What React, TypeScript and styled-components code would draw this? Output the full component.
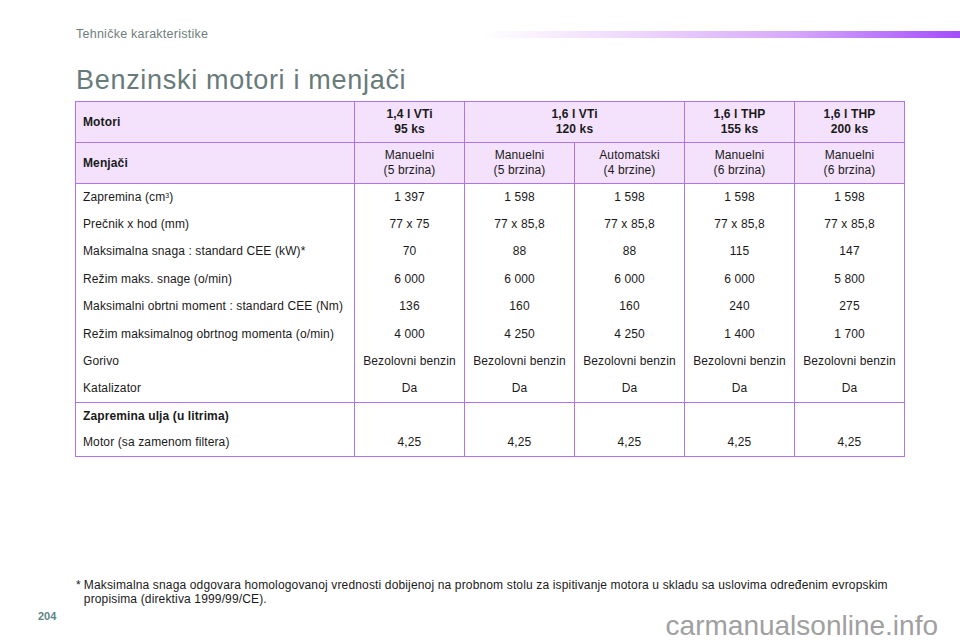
import React from "react";
import styled, { createGlobalStyle } from "styled-components";

const Global = createGlobalStyle`
  html, body { margin: 0; padding: 0; background: #fff; }
  body { font-family: "Liberation Sans", Arial, sans-serif; }
`;

const Page = styled.div`
  width: 960px;
  height: 640px;
  display: flex;
  flex-direction: column;
  overflow: hidden;
  background: #fff;
`;

const TopBar = styled.div`
  display: flex;
  align-items: center;
  padding-top: 27px;
  height: 14px;
`;

const Section = styled.div`
  flex: 1;
  padding-left: 76px;
  font-size: 12.5px;
  letter-spacing: 0.25px;
  color: #6f7d7d;
`;

const GradientBar = styled.div`
  width: 478px;
  height: 7px;
  margin-top: 1px;
  background: linear-gradient(to right, rgba(255, 255, 255, 0) 0%, #efd9fc 30%, #d7a9fb 65%, #a44cfd 100%);
`;

const Title = styled.h1`
  margin: 23px 0 0 76px;
  font-weight: normal;
  font-size: 27px;
  letter-spacing: 0.7px;
  line-height: 32px;
  color: #687a7a;
`;

const Table = styled.table`
  margin: 5px 0 0 75px;
  width: 829px;
  border-collapse: collapse;
  table-layout: fixed;
  font-size: 12px;
  letter-spacing: 0.12px;
  color: #1a1a1a;
  border: 1px solid #ad74f1;
`;

const Head = styled.tr`
  background: #f4e2fc;
  height: 41px;
`;

const Row = styled.tr<{ $h?: number; $sep?: boolean }>`
  height: ${(p) => p.$h ?? 27.4}px;
  ${(p) => (p.$sep ? "border-bottom: 1px solid #ad74f1;" : "")}
`;

const Cell = styled.td<{ $left?: boolean; $bold?: boolean }>`
  border-left: 1px solid #ad74f1;
  border-right: 1px solid #ad74f1;
  padding: ${(p) => (p.$left ? "0 0 0 7px" : "0")};
  text-align: ${(p) => (p.$left ? "left" : "center")};
  font-weight: ${(p) => (p.$bold ? "bold" : "normal")};
  vertical-align: middle;
  line-height: 15px;
  white-space: nowrap;
`;

const HeadCell = styled(Cell)`
  border-bottom: 1px solid #ad74f1;
`;

const Spacer = styled.div`
  flex: 1;
`;

const Footnote = styled.div`
  margin-left: 76px;
  font-size: 12px;
  letter-spacing: 0.15px;
  line-height: 13.5px;
  color: #1a1a1a;
  display: flex;
  gap: 3px;
`;

const Star = styled.span`
  flex: none;
`;

const Footer = styled.div`
  display: flex;
  justify-content: space-between;
  align-items: flex-start;
  height: 34px;
  flex: none;
`;

const PageNo = styled.div`
  margin-left: 38px;
  margin-top: 4px;
  font-size: 11px;
  line-height: 13px;
  font-weight: bold;
  color: #5e8585;
`;

const Watermark = styled.div`
  margin-right: 22px;
  margin-top: 8px;
  font-size: 28px;
  line-height: 24px;
  color: #a0a0a0;
`;

const Sup = styled.sup`
  font-size: 7px;
  vertical-align: top;
  position: relative;
  top: -2px;
`;

const dataRows: [React.ReactNode, string[]][] = [
  [<>Zapremina (cm<Sup>3</Sup>)</>, ["1 397", "1 598", "1 598", "1 598", "1 598"]],
  ["Prečnik x hod (mm)", ["77 x 75", "77 x 85,8", "77 x 85,8", "77 x 85,8", "77 x 85,8"]],
  ["Maksimalna snaga : standard CEE (kW)*", ["70", "88", "88", "115", "147"]],
  ["Režim maks. snage (o/min)", ["6 000", "6 000", "6 000", "6 000", "5 800"]],
  ["Maksimalni obrtni moment : standard CEE (Nm)", ["136", "160", "160", "240", "275"]],
  ["Režim maksimalnog obrtnog momenta (o/min)", ["4 000", "4 250", "4 250", "1 400", "1 700"]],
  ["Gorivo", ["Bezolovni benzin", "Bezolovni benzin", "Bezolovni benzin", "Bezolovni benzin", "Bezolovni benzin"]],
  ["Katalizator", ["Da", "Da", "Da", "Da", "Da"]],
];

export default function App() {
  return (
    <Page>
      <Global />
      <TopBar>
        <Section>Tehničke karakteristike</Section>
        <GradientBar />
      </TopBar>
      <Title>Benzinski motori i menjači</Title>
      <Table>
        <colgroup>
          <col style={{ width: 279 }} />
          <col style={{ width: 110 }} />
          <col style={{ width: 110 }} />
          <col style={{ width: 110 }} />
          <col style={{ width: 110 }} />
          <col style={{ width: 110 }} />
        </colgroup>
        <tbody>
          <Head>
            <HeadCell $left $bold>Motori</HeadCell>
            <HeadCell $bold>1,4 l VTi<br />95 ks</HeadCell>
            <HeadCell $bold colSpan={2}>1,6 l VTi<br />120 ks</HeadCell>
            <HeadCell $bold>1,6 l THP<br />155 ks</HeadCell>
            <HeadCell $bold>1,6 l THP<br />200 ks</HeadCell>
          </Head>
          <Head>
            <HeadCell $left $bold>Menjači</HeadCell>
            <HeadCell>Manuelni<br />(5 brzina)</HeadCell>
            <HeadCell>Manuelni<br />(5 brzina)</HeadCell>
            <HeadCell>Automatski<br />(4 brzine)</HeadCell>
            <HeadCell>Manuelni<br />(6 brzina)</HeadCell>
            <HeadCell>Manuelni<br />(6 brzina)</HeadCell>
          </Head>
          {dataRows.map(([label, vals], i) => (
            <Row key={i} $sep={i === dataRows.length - 1}>
              <Cell $left>{label}</Cell>
              {vals.map((v, j) => (
                <Cell key={j}>{v}</Cell>
              ))}
            </Row>
          ))}
          <Row $h={27}>
            <Cell $left $bold>Zapremina ulja (u litrima)</Cell>
            <Cell /><Cell /><Cell /><Cell /><Cell />
          </Row>
          <Row $h={27}>
            <Cell $left>Motor (sa zamenom filtera)</Cell>
            {["4,25", "4,25", "4,25", "4,25", "4,25"].map((v, j) => (
              <Cell key={j}>{v}</Cell>
            ))}
          </Row>
        </tbody>
      </Table>
      <Spacer />
      <Footnote>
        <Star>*</Star>
        <span>
          Maksimalna snaga odgovara homologovanoj vrednosti dobijenoj na probnom stolu za ispitivanje motora u skladu sa uslovima određenim evropskim
          <br />
          propisima (direktiva 1999/99/CE).
        </span>
      </Footnote>
      <Footer>
        <PageNo>204</PageNo>
        <Watermark>carmanualsonline.info</Watermark>
      </Footer>
    </Page>
  );
}
